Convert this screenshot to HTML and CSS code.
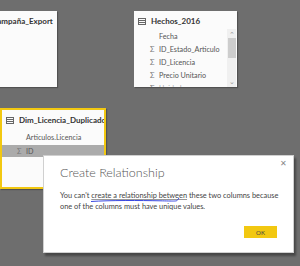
FILE: index.html
```html
<html>
    <head>
        <link rel="stylesheet" href="styles.css">
    </head>
    <body>
        <div class="canvas">
            <div class="table table--campana">
                <div class="table__header">
                    <svg class="table__icon" width="8" height="7" viewBox="0 0 8 7"><rect x="0.5" y="0.5" width="7" height="6" fill="none" stroke="#666"/><path d="M0 2.5H8M0 4.5H8" stroke="#666"/></svg>
                    <span class="table__title">Campaña_Export</span>
                </div>
            </div>

            <div class="table table--hechos">
                <div class="table__header">
                    <svg class="table__icon" width="8" height="7" viewBox="0 0 8 7"><rect x="0.5" y="0.5" width="7" height="6" fill="none" stroke="#666"/><path d="M0 2.5H8M0 4.5H8" stroke="#666"/></svg>
                    <span class="table__title">Hechos_2016</span>
                </div>
                <ul class="table__fields">
                    <li class="field"><span class="field__icon"></span>Fecha</li>
                    <li class="field"><span class="field__icon">Σ</span>ID_Estado_Articulo</li>
                    <li class="field"><span class="field__icon">Σ</span>ID_Licencia</li>
                    <li class="field"><span class="field__icon">Σ</span>Precio Unitario</li>
                    <li class="field field--cut"><span class="field__icon">Σ</span>Unidades</li>
                </ul>
                <div class="scrollbar">
                    <span class="scrollbar__arrow">&#8963;</span>
                    <span class="scrollbar__thumb"></span>
                    <span class="scrollbar__arrow scrollbar__arrow--down">&#8964;</span>
                </div>
            </div>

            <div class="table table--licencia">
                <div class="table__header">
                    <svg class="table__icon" width="8" height="7" viewBox="0 0 8 7"><rect x="0.5" y="0.5" width="7" height="6" fill="none" stroke="#666"/><path d="M0 2.5H8M0 4.5H8" stroke="#666"/></svg>
                    <span class="table__title">Dim_Licencia_Duplicado</span>
                </div>
                <ul class="table__fields">
                    <li class="field"><span class="field__icon"></span>Articulos.Licencia</li>
                    <li class="field field--selected"><span class="field__icon">Σ</span>ID</li>
                </ul>
            </div>

            <div class="dialog">
                <span class="dialog__close">✕</span>
                <h1 class="dialog__title">Create Relationship</h1>
                <p class="dialog__text">You can't <span class="dialog__link">create a relationship between</span> these two columns because one of the columns must have unique values.</p>
                <div class="dialog__actions">
                    <button class="button">OK</button>
                </div>
            </div>

            <svg class="scribble" width="100" height="10" viewBox="0 0 100 10">
                <path d="M1 5.5 C 20 4.2, 50 4.4, 70 4.8 S 86 5.6, 89 2" fill="none" stroke="#2233dd" stroke-width="0.9"/>
            </svg>
        </div>
    </body>
</html>
```

FILE: styles.css
```css
* {
    box-sizing: border-box;
}

body {
    margin: 0;
    background-color: #6e6e6e;
    font-family: Lato, "Noto Sans", sans-serif;
    overflow: hidden;
}

.canvas {
    position: relative;
    width: 300px;
    height: 266px;
}

.table {
    position: absolute;
    background-color: #fbfbfb;
    box-shadow: 1px 1px 1px rgba(0, 0, 0, 0.25);
    overflow: hidden;
}

.table--campana {
    left: -22px;
    top: 11px;
    width: 79px;
    height: 76px;
}

.table--campana .table__header {
    padding-left: 1px;
}

.table--hechos {
    left: 134px;
    top: 11px;
    width: 103px;
    height: 76px;
}

.table--licencia {
    left: 0;
    top: 108px;
    width: 106px;
    height: 81px;
    border: 2px solid #f2c811;
}

.table__header {
    display: flex;
    align-items: center;
    gap: 5px;
    height: 18px;
    padding: 2px 0 0 4px;
    white-space: nowrap;
}

.table--licencia .table__header {
    padding: 0 0 0 4px;
    height: 20px;
}

.table__icon {
    flex-shrink: 0;
}

.table__title {
    font-size: 8px;
    font-weight: 700;
    color: #333;
}

.table__fields {
    list-style: none;
    margin: 0;
    padding: 1px 0 0 0;
}

.field {
    display: flex;
    align-items: center;
    height: 13px;
    padding-left: 16px;
    font-size: 7.2px;
    color: #555;
    white-space: nowrap;
}

.field--cut {
    color: #aaa;
}

.table--licencia .field {
    height: 12px;
    padding-left: 15px;
    margin-right: -1px;
}

.field--selected {
    margin-top: 2px;
    background-color: #ababab;
    height: 11px;
}

.field__icon {
    width: 9px;
    font-size: 7.5px;
    color: #777;
}

.scrollbar {
    position: absolute;
    right: 1px;
    top: 18px;
    bottom: 0;
    width: 9px;
    background-color: #f0f0f0;
    display: flex;
    flex-direction: column;
    align-items: center;
}

.scrollbar__arrow {
    height: 8px;
    font-size: 7px;
    line-height: 10px;
    color: #999;
}

.scrollbar__arrow--down {
    margin-top: auto;
    line-height: 4px;
}

.scrollbar__thumb {
    width: 8px;
    height: 20px;
    margin-top: 1px;
    background-color: #cdcdcd;
}

.dialog {
    position: absolute;
    left: 43px;
    top: 155px;
    width: 251px;
    height: 98px;
    background-color: #ffffff;
    border: 1px solid #d0d0d0;
    box-shadow: 2px 3px 2px rgba(0, 0, 0, 0.35);
    padding: 9px 8px 0 16px;
}

.dialog__close {
    position: absolute;
    right: 6px;
    top: 2px;
    font-size: 8px;
    color: #888;
}

.dialog__title {
    margin: 0;
    font-size: 12.5px;
    font-weight: 300;
    color: #555;
}

.dialog__text {
    margin: 10px 0 0 0;
    font-size: 7.4px;
    line-height: 11px;
    color: #444;
}

.dialog__link {
    text-decoration: underline;
    text-decoration-color: #999;
}

.dialog__actions {
    display: flex;
    justify-content: flex-end;
    margin-top: 14px;
    margin-right: 8px;
}

.button {
    width: 33px;
    height: 12px;
    padding: 0;
    border: none;
    background-color: #f2c811;
    color: #444;
    font-family: Lato, sans-serif;
    font-size: 6px;
}

.scribble {
    position: absolute;
    left: 90px;
    top: 196px;
}
```
